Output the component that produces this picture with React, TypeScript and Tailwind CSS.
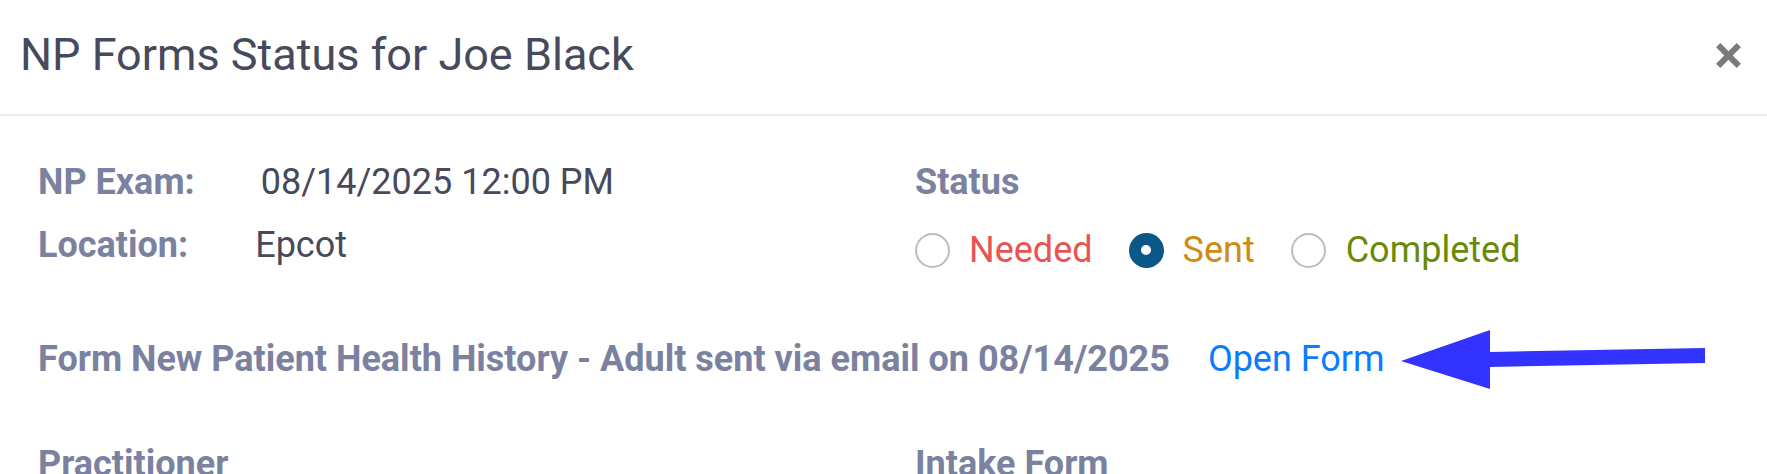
const Radio = ({ checked }: { checked?: boolean }) => {
  if (checked) {
    return (
      <span className="flex h-[35px] w-[35px] shrink-0 items-center justify-center rounded-full bg-[#0c5688]">
        <span className="h-[10px] w-[10px] rounded-full bg-white" />
      </span>
    );
  }
  return <span className="h-[35px] w-[35px] shrink-0 rounded-full border-2 border-[#b8bcc4] bg-white" />;
};

const App = () => {
  return (
    <div className="relative h-[474px] w-full overflow-hidden bg-white font-['Roboto',sans-serif]">
      {/* Header */}
      <div className="flex items-center justify-between border-b-2 border-[#ececf2] pl-[20px] pr-[26px] pt-[29px] pb-[33px]">
        <h1 className="text-[45px] leading-[52px] font-normal text-[#464a5c]">NP Forms Status for Joe Black</h1>
        <button className="flex h-[25px] w-[25px] items-center justify-center">
          <svg width="25" height="25" viewBox="0 0 25 25">
            <line x1="2.2" y1="2.2" x2="22.8" y2="22.8" stroke="#7a7a7a" strokeWidth="6" />
            <line x1="22.8" y1="2.2" x2="2.2" y2="22.8" stroke="#7a7a7a" strokeWidth="6" />
          </svg>
        </button>
      </div>

      {/* Body */}
      <div className="pl-[38px] pt-[42px] text-[36px] leading-[48px]">
        <div className="grid grid-cols-[877px_1fr]">
          <div className="flex flex-col gap-[15px]">
            <div className="flex">
              <span className="font-bold text-[#7b829f]">NP Exam:</span>
              <span className="ml-[66px] text-[#464a5c]">08/14/2025 12:00 PM</span>
            </div>
            <div className="flex">
              <span className="font-bold text-[#7b829f]">Location:</span>
              <span className="ml-[67px] text-[#464a5c]">Epcot</span>
            </div>
          </div>
          <div className="flex flex-col gap-[20px]">
            <span className="font-bold text-[#7b829f]">Status</span>
            <div className="flex items-center">
              <Radio />
              <span className="ml-[19px] mr-[36px] text-[#ea5450]">Needed</span>
              <Radio checked />
              <span className="ml-[19px] mr-[36px] text-[#d08b12]">Sent</span>
              <Radio />
              <span className="ml-[20px] text-[#688a07]">Completed</span>
            </div>
          </div>
        </div>

        <div className="mt-[61px] flex">
          <span className="font-bold text-[#7b829f]">Form New Patient Health History - Adult sent via email on 08/14/2025</span>
          <a className="ml-[38px] cursor-pointer text-[#0b7bff]">Open Form</a>
        </div>

        <div className="mt-[57px] grid grid-cols-[877px_1fr]">
          <span className="font-bold text-[#7b829f]">Practitioner</span>
          <span className="font-bold text-[#7b829f]">Intake Form</span>
        </div>
      </div>

      {/* annotation arrow */}
      <svg className="absolute left-[1390px] top-[320px]" width="330" height="80" viewBox="0 0 330 80">
        <polygon points="11,41 100,10 100,32 315,28 315,43 100,47 100,69" fill="#3333ff" />
      </svg>
    </div>
  );
};

export default App;
